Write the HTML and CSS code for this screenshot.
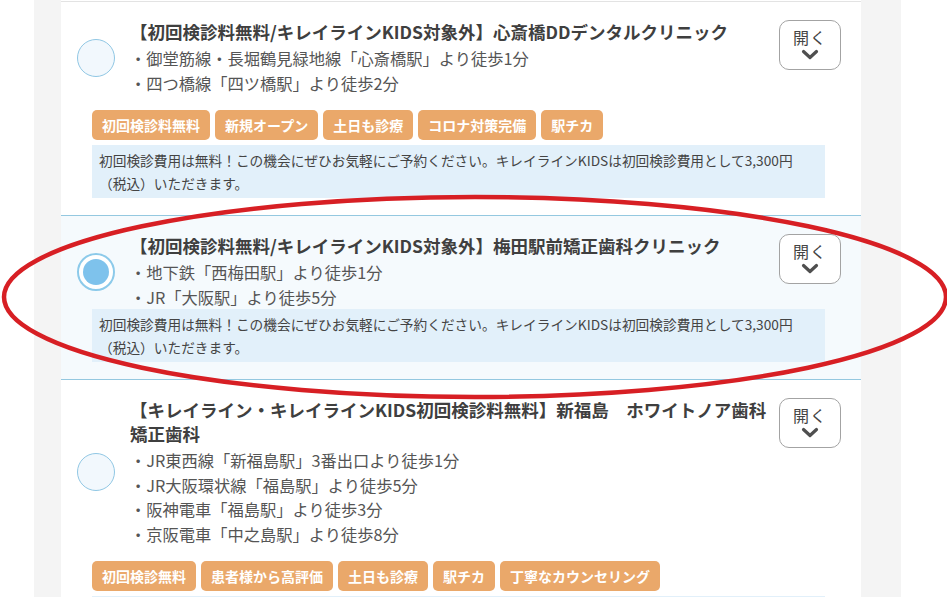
FILE: index.html
```html
<!DOCTYPE html>
<html lang="ja">
<head>
<meta charset="utf-8">
<title>クリニック一覧</title>
<link rel="stylesheet" href="styles.css">
</head>
<body>
<div class="page">
  <div class="card">
    <div class="item item-first">
      <div class="row">
        <span class="radio"></span>
        <div class="body">
          <div class="title">【初回検診料無料/キレイラインKIDS対象外】心斎橋DDデンタルクリニック</div>
          <ul class="lines">
            <li>・御堂筋線・長堀鶴見緑地線「心斎橋駅」より徒歩1分</li>
            <li>・四つ橋線「四ツ橋駅」より徒歩2分</li>
          </ul>
        </div>
        <button class="open-btn" type="button"><span>開く</span><svg class="chev" width="18" height="11" viewBox="0 0 18 11"><polyline points="2.5,2.5 9,8.5 15.5,2.5" fill="none" stroke="#4f4f4f" stroke-width="3.2" stroke-linecap="round" stroke-linejoin="round"/></svg></button>
      </div>
      <div class="tags">
        <span class="tag">初回検診料無料</span>
        <span class="tag">新規オープン</span>
        <span class="tag">土日も診療</span>
        <span class="tag">コロナ対策完備</span>
        <span class="tag">駅チカ</span>
      </div>
      <p class="desc desc-after-tags">初回検診費用は無料！この機会にぜひお気軽にご予約ください。キレイラインKIDSは初回検診費用として3,300円（税込）いただきます。</p>
    </div>

    <div class="item item-selected">
      <div class="row">
        <span class="radio radio-on"></span>
        <div class="body">
          <div class="title">【初回検診料無料/キレイラインKIDS対象外】梅田駅前矯正歯科クリニック</div>
          <ul class="lines">
            <li>・地下鉄「西梅田駅」より徒歩1分</li>
            <li>・JR「大阪駅」より徒歩5分</li>
          </ul>
        </div>
        <button class="open-btn" type="button"><span>開く</span><svg class="chev" width="18" height="11" viewBox="0 0 18 11"><polyline points="2.5,2.5 9,8.5 15.5,2.5" fill="none" stroke="#4f4f4f" stroke-width="3.2" stroke-linecap="round" stroke-linejoin="round"/></svg></button>
      </div>
      <p class="desc">初回検診費用は無料！この機会にぜひお気軽にご予約ください。キレイラインKIDSは初回検診費用として3,300円（税込）いただきます。</p>
    </div>

    <div class="item">
      <div class="row">
        <span class="radio"></span>
        <div class="body">
          <div class="title">【キレイライン・キレイラインKIDS初回検診料無料】新福島　ホワイトノア歯科矯正歯科</div>
          <ul class="lines">
            <li>・JR東西線「新福島駅」3番出口より徒歩1分</li>
            <li>・JR大阪環状線「福島駅」より徒歩5分</li>
            <li>・阪神電車「福島駅」より徒歩3分</li>
            <li>・京阪電車「中之島駅」より徒歩8分</li>
          </ul>
        </div>
        <button class="open-btn" type="button"><span>開く</span><svg class="chev" width="18" height="11" viewBox="0 0 18 11"><polyline points="2.5,2.5 9,8.5 15.5,2.5" fill="none" stroke="#4f4f4f" stroke-width="3.2" stroke-linecap="round" stroke-linejoin="round"/></svg></button>
      </div>
      <div class="tags">
        <span class="tag">初回検診無料</span>
        <span class="tag">患者様から高評価</span>
        <span class="tag">土日も診療</span>
        <span class="tag">駅チカ</span>
        <span class="tag">丁寧なカウンセリング</span>
      </div>
      <div class="desc desc-after-tags desc-clipped"></div>
    </div>
  </div>
</div>
<svg class="annotation" width="947" height="597" viewBox="0 0 947 597"><ellipse cx="475" cy="297" rx="471" ry="100" fill="none" stroke="#d71f24" stroke-width="4.5"/></svg>
</body>
</html>
```

FILE: styles.css
```css
* { box-sizing: border-box; }

html, body {
  margin: 0;
  padding: 0;
  background: #ffffff;
  height: 597px;
  overflow: hidden;
}

body {
  font-family: "Noto Sans CJK JP", "Noto Sans", sans-serif;
  color: #444444;
  position: relative;
}

.page {
  width: 867px;
  margin-left: 34px;
  min-height: 597px;
  background: #f4f4f4;
  padding: 0 40px 0 27px;
}

.card {
  width: 800px;
  background: #ffffff;
  padding-top: 1px;
  min-height: 597px;
}

.item {
  padding: 18px 20px 17px 16px;
  border-bottom: 1px solid #94c8e0;
}

.item-first {
  border-top: 1px solid #e3e3e3;
}

.item-selected {
  background: #f5fafd;
}

.row {
  display: flex;
  align-items: center;
}

.radio {
  flex: 0 0 auto;
  width: 38px;
  height: 38px;
  border-radius: 50%;
  border: 1px solid #90c7e4;
  background: #f2f8fd;
  margin-right: 15px;
  display: flex;
  align-items: center;
  justify-content: center;
}

.radio-on {
  border: 2px solid #8ccaea;
  background: #ffffff;
}

.radio-on::after {
  content: "";
  width: 26px;
  height: 26px;
  border-radius: 50%;
  background: #7ec2ec;
}

.body {
  flex: 1 1 auto;
  min-width: 0;
}

.title {
  font-size: 17.5px;
  font-weight: 700;
  line-height: 24px;
  color: #3f3f3f;
}

.lines {
  list-style: none;
  margin: 2px 0 0;
  padding: 0;
  font-size: 16.25px;
  line-height: 24.5px;
  color: #555555;
}

.open-btn {
  align-self: flex-start;
  flex: 0 0 auto;
  width: 62px;
  height: 50px;
  margin-left: 10px;
  border: 1px solid #a3a3a3;
  border-radius: 10px;
  background: #ffffff;
  display: flex;
  flex-direction: column;
  align-items: center;
  justify-content: flex-start;
  padding: 7px 0 0;
  font-family: "Noto Sans CJK JP", sans-serif;
  font-size: 16px;
  line-height: 18px;
  letter-spacing: 1px;
  color: #444444;
}

.chev {
  display: block;
  margin-top: 3px;
}

.tags {
  display: flex;
  gap: 5px;
  margin: 15px 0 0 15px;
}

.tag {
  height: 30px;
  line-height: 30px;
  padding: 0 10px;
  border-radius: 5px;
  background: #eaa86a;
  color: #ffffff;
  font-size: 14px;
  font-weight: 700;
}

.desc {
  margin: 0 16px 0 15px;
  padding: 3.5px 7px;
  background: #e2f0fa;
  font-size: 13.7px;
  line-height: 23px;
  color: #444444;
}

.desc-after-tags {
  margin-top: 5px;
}

.desc-clipped {
  height: 53px;
}

.annotation {
  position: absolute;
  left: 0;
  top: 0;
  pointer-events: none;
}
```
